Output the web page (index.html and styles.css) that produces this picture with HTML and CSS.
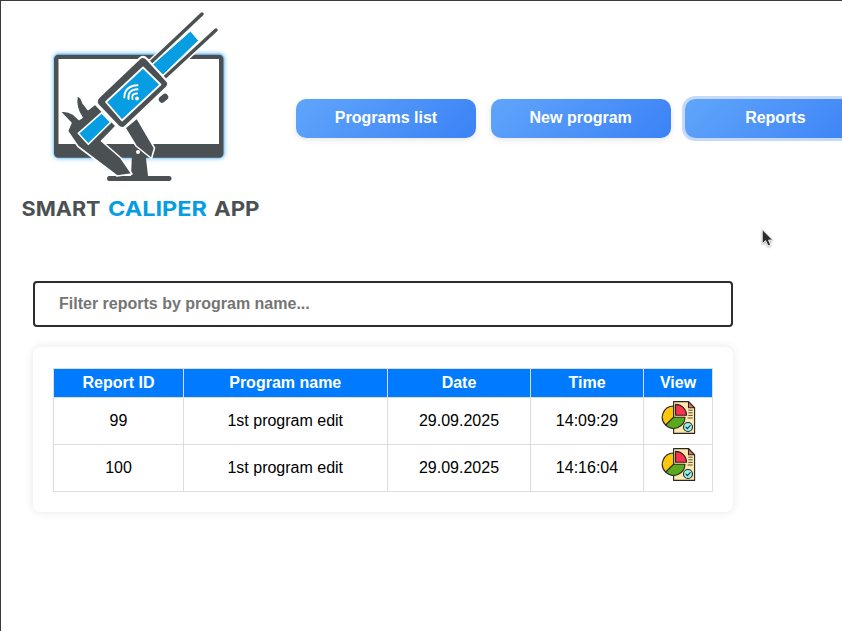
FILE: index.html
```html
<!DOCTYPE html>
<html lang="en">
<head>
<meta charset="utf-8">
<title>Smart Caliper App</title>
<link rel="stylesheet" href="styles.css">
</head>
<body>
<svg class="defs" width="0" height="0" aria-hidden="true">
  <symbol id="report" viewBox="0 0 36 36">
    <g stroke="#2b2622" stroke-width="1.1" stroke-linejoin="round" stroke-linecap="round">
      <path d="M13.6 1.6H28.5L34.6 7.8V33.4H13.6Z" fill="#ffe8ad"/>
      <path d="M28.5 1.6V7.8H34.6Z" fill="#d9736d"/>
      <path d="M13.6 6V17.3L5.7 25.2A11.2 11.2 0 0 1 13.6 6Z" fill="#fdc70c"/>
      <path d="M13.6 17.3H25A11.4 11.4 0 0 1 5.7 25.2Z" fill="#5aaa20"/>
      <path d="M15.6 4.4A11 11 0 0 1 26.6 15.3H15.6Z" fill="#ff3151"/>
      <path d="M28.7 10.2H32.3M28.7 12.8H32.3M28.7 15.4H32.3M28 18H32.3" fill="none" stroke-width=".8"/>
      <circle cx="28" cy="27" r="4.5" fill="#8ff0f4"/>
      <path d="M26 27.1L27.4 28.6L30.2 25.5" fill="none"/>
    </g>
  </symbol>
</svg>
<div class="page">
  <header class="header">
    <svg class="logo" viewBox="0 0 260 225" role="img" aria-label="Smart Caliper App">
      <rect class="glow" x="53.500" y="53.500" width="171" height="105" rx="5"/>
      <rect class="dark" x="54" y="54.800" width="169.500" height="103" rx="4.500"/>
      <path fill="#fff" d="M58.500 59H219V144H58.500Z"/>
      <path class="dark" d="M132 154H145.500L148 176H169Q171.500 176 171.500 178.500T169 181H109Q107 181 107 178.500T109 176H131Z"/>
      <g class="outlined">
        <path class="dark" d="M125 128L137 118L154.500 148L151.500 158.500L136 146Z"/>
        <path class="dark" d="M60 111.500Q67 110 73 114L79 119.500L82 117.500Q75 107 77 96Q81 96 83 103L88 109.500L95 104L116 126L101.500 141L121 158L132 174L117 176L78 146.500L67.500 131L71 123Z"/>
        <path class="blue" d="M101.700 112.700L110.700 122.300L88.300 144.300L78.300 133.300Z"/>
      </g>
      <circle cx="138" cy="152" r="2" fill="#fff"/>
      <path d="M202 14L148 65M216 30L164 78" fill="none" stroke="#fff" stroke-width="6.500"/>
      <path d="M202 14L148 65M216 30L164 78" fill="none" stroke="#4b5052" stroke-width="3.500" stroke-linecap="round"/>
      <path class="blue" stroke="#fff" d="M190.500 31L198.500 40.500L163 75L152 65Z"/>
      <path d="M162 99.500L165 97" stroke="#4b5052" stroke-width="6.500" stroke-linecap="round"/>
      <path class="dark" stroke="#fff" stroke-width="2" stroke-linejoin="round" d="M139.500 58.500Q143 55 147 59L167 81Q170 84 166 88L125.500 126.500Q122 130 118 126L98 105Q95 101 99 97Z"/>
      <path class="blue" stroke="#fff" stroke-width="1.800" stroke-linejoin="round" d="M143 67.500L160.500 84.500L122 120.500L106 102Z"/>
      <circle cx="137" cy="98.500" r="1.900" fill="#fff"/>
      <path d="M132.500 99Q131 93.500 137 93.500M128.500 99Q127.500 89.500 137.500 89.300M124.300 97.500Q124.500 86 137.500 85.300" fill="none" stroke="#fff" stroke-width="1.900" stroke-linecap="round"/>
      <g class="brand">
        <text x="21.500" y="216" textLength="79" lengthAdjust="spacingAndGlyphs">SMART</text>
        <text class="accent" x="108" y="216" textLength="99" lengthAdjust="spacingAndGlyphs">CALIPER</text>
        <text x="214" y="216" textLength="45.500" lengthAdjust="spacingAndGlyphs">APP</text>
      </g>
    </svg>
    <nav class="nav">
      <button class="btn">Programs list</button>
      <button class="btn">New program</button>
      <button class="btn active">Reports</button>
    </nav>
  </header>
  <main class="main">
    <input class="filter" type="text" placeholder="Filter reports by program name...">
    <section class="card">
      <table>
        <colgroup><col class="c-id"><col class="c-name"><col class="c-date"><col class="c-time"><col class="c-view"></colgroup>
        <thead><tr><th>Report ID</th><th>Program name</th><th>Date</th><th>Time</th><th>View</th></tr></thead>
        <tbody>
          <tr><td>99</td><td>1st program edit</td><td>29.09.2025</td><td>14:09:29</td><td><svg class="icon"><use href="#report"/></svg></td></tr>
          <tr><td>100</td><td>1st program edit</td><td>29.09.2025</td><td>14:16:04</td><td><svg class="icon"><use href="#report"/></svg></td></tr>
        </tbody>
      </table>
    </section>
  </main>
</div>
<svg class="cursor" viewBox="0 0 14 20" aria-hidden="true"><path d="M2 1.500V15L5.200 12L7.500 17L10 16L8 11.500H12Z" fill="#2b2b2b" stroke="#fff" stroke-width=".8"/></svg>
</body>
</html>
```
FILE: styles.css
```css
* { box-sizing: border-box; }
body {
  margin: 0;
  height: 631px;
  overflow: hidden;
  background: #fff;
  color: #000;
  font: 16px "Liberation Sans", Arial, sans-serif;
}
.defs, .cursor { position: absolute; }
.page {
  height: 631px;
  overflow: hidden;
  border-top: 1px solid #3b3a3d;
  border-left: 1px solid #3b3a3d;
}
.header { display: flex; height: 225px; margin-left: -1px; margin-top: -1px; }
.logo { flex: none; width: 260px; height: 225px; overflow: visible; }
.dark { fill: #4b5052; }
.blue { fill: #079de3; }
.glow { fill: #8fd0ff; filter: drop-shadow(0 0 2px #6fc3ff); }
.outlined path { stroke: #fff; stroke-width: 1.6; stroke-linejoin: round; }
.brand { font: 700 20.5px Inter, sans-serif; fill: #4b5052; }
.brand .accent { fill: #079de3; }
.nav { display: flex; gap: 14.7px; margin: 99px 0 0 36px; }
.btn {
  flex: none;
  width: 180px;
  height: 39px;
  padding: 0 0 2px;
  border: 0;
  border-radius: 10px;
  color: #fff;
  font: bold 16px "Liberation Sans", Arial, sans-serif;
  background: linear-gradient(135deg, #60a5fa, #3b82f6);
  box-shadow: 0 2px 6px rgba(0, 0, 0, .1);
}
.btn.active { box-shadow: 0 0 0 3px #c4d9fc; }
.main { width: 700px; margin: 56px 0 0 32px; }
.filter {
  display: block;
  width: 700px;
  height: 46px;
  padding: 0 24px;
  border: 2px solid #2d2d30;
  border-radius: 4px;
  font: bold 16px "Liberation Sans", Arial, sans-serif;
}
.filter::placeholder { color: #757575; }
.card {
  height: 165px;
  margin-top: 20px;
  padding: 21px 20px 20px;
  border-radius: 8px;
  box-shadow: 0 0 10px rgba(0, 0, 0, .1);
}
table { width: 660px; border-collapse: collapse; table-layout: fixed; text-align: center; }
th, td { padding: 0; border: 1px solid #ddd; }
th:nth-child(2), td:nth-child(2) { padding-right: .5px; }
th { height: 29px; color: #fff; background: #007bff; }
td { height: 47px; }
.c-id { width: 130px; }
.c-name { width: 204px; }
.c-date { width: 143px; }
.c-time { width: 113px; }
.c-view { width: 69px; }
.icon { display: block; width: 36px; height: 36px; margin: -6px auto 0; }
.cursor { left: 760px; top: 228px; width: 15px; height: 21px; filter: drop-shadow(0 1px 1px rgba(0, 0, 0, .35)); }
```
